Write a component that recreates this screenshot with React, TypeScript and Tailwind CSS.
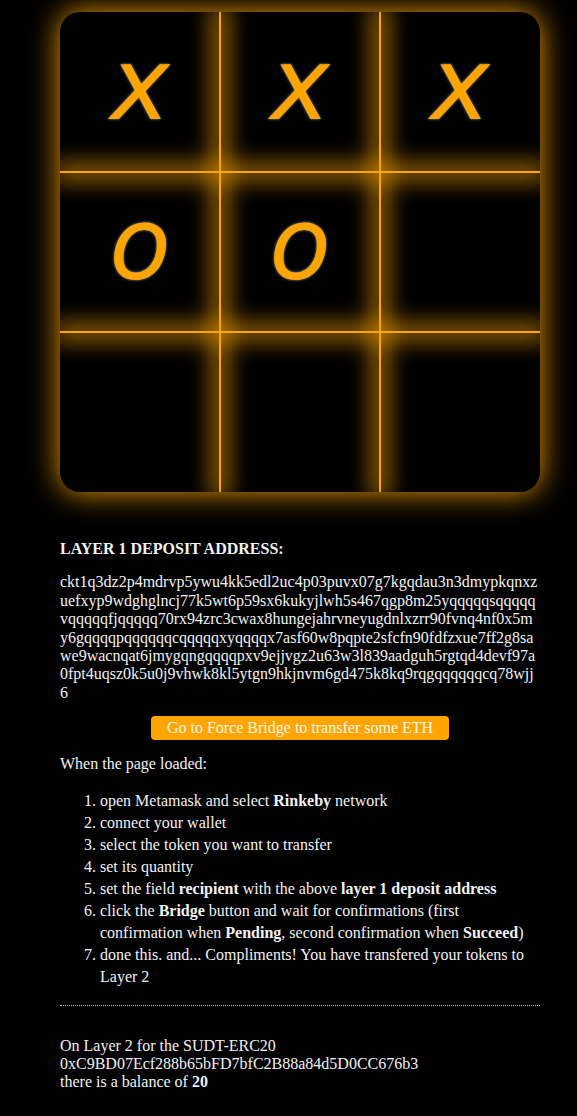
import React from "react";

const serif = "font-['Liberation_Serif','Times_New_Roman',serif]";

const cells: string[] = ["x", "x", "x", "o", "o", "", "", "", ""];

export default function App() {
  return (
    <div className={`min-h-[1116px] bg-black text-[#f2f2f2] ${serif} text-[16px]`}>
      <div className="ml-[60px] w-[480px] pt-[12px] pb-[20px]">
        <div className="relative h-[480px] w-[480px] overflow-hidden rounded-[20px] bg-black shadow-[0_0_30px_rgba(255,165,0,0.95)]">
          <div className="absolute left-[159px] top-0 h-full w-[2px] bg-[#ffa500] shadow-[0_0_22px_7px_rgba(255,165,0,0.7)]" />
          <div className="absolute left-[319px] top-0 h-full w-[2px] bg-[#ffa500] shadow-[0_0_22px_7px_rgba(255,165,0,0.7)]" />
          <div className="absolute top-[159px] left-0 w-full h-[2px] bg-[#ffa500] shadow-[0_0_22px_7px_rgba(255,165,0,0.7)]" />
          <div className="absolute top-[319px] left-0 w-full h-[2px] bg-[#ffa500] shadow-[0_0_22px_7px_rgba(255,165,0,0.7)]" />
          <div className="relative grid h-full grid-cols-3 grid-rows-3">
            {cells.map((c, i) => (
              <div key={i} className="flex items-center justify-center pb-[14px]">
                <span className="font-['DejaVu_Sans','Noto_Sans',sans-serif] italic text-[100px] leading-none text-[#ffa500] [text-shadow:0_0_3px_#8a9bb0]">
                  {c}
                </span>
              </div>
            ))}
          </div>
        </div>

        <div className="mt-[48px] font-bold leading-[18.4px]">LAYER 1 DEPOSIT ADDRESS:</div>
        <p className="mt-[15px] break-all leading-[18.4px]">
          ckt1q3dz2p4mdrvp5ywu4kk5edl2uc4p03puvx07g7kgqdau3n3dmypkqnxzuefxyp9wdghglncj77k5wt6p59sx6kukyjlwh5s467qgp8m25yqqqqqsqqqqqvqqqqqfjqqqqq70rx94zrc3cwax8hungejahrvneyugdnlxzrr90fvnq4nf0x5my6gqqqqpqqqqqqcqqqqqxyqqqqx7asf60w8pqpte2sfcfn90fdfzxue7ff2g8sawe9wacnqat6jmygqngqqqqpxv9ejjvgz2u63w3l839aadguh5rgtqd4devf97a0fpt4uqsz0k5u0j9vhwk8kl5ytgn9hkjnvm6gd475k8kq9rqgqqqqqqcq78wjj6
        </p>
        <div className="mt-[14px] flex justify-center">
          <button className="h-[24px] rounded-[4px] bg-[#ffa500] px-[16px] text-[16px] leading-[24px] text-[#fdf6ea]">
            Go to Force Bridge to transfer some ETH
          </button>
        </div>
        <p className="mt-[15px] leading-[18.4px]">When the page loaded:</p>
        <ol className="mt-[16px] list-decimal pl-[40px] leading-[22px]">
          <li>
            open Metamask and select <b>Rinkeby</b> network
          </li>
          <li>connect your wallet</li>
          <li>select the token you want to transfer</li>
          <li>set its quantity</li>
          <li>
            set the field <b>recipient</b> with the above <b>layer 1 deposit address</b>
          </li>
          <li>
            click the <b>Bridge</b> button and wait for confirmations (first confirmation when <b>Pending</b>, second
            confirmation when <b>Succeed</b>)
          </li>
          <li>done this. and... Compliments! You have transfered your tokens to Layer 2</li>
        </ol>
        <hr className="mt-[17px] border-0 border-t border-dotted border-[#bbbbbb]" />
        <p className="mt-[31px] leading-[18.4px]">
          On Layer 2 for the SUDT-ERC20
          <br />
          0xC9BD07Ecf288b65bFD7bfC2B88a84d5D0CC676b3
          <br />
          there is a balance of <b>20</b>
        </p>
      </div>
    </div>
  );
}
